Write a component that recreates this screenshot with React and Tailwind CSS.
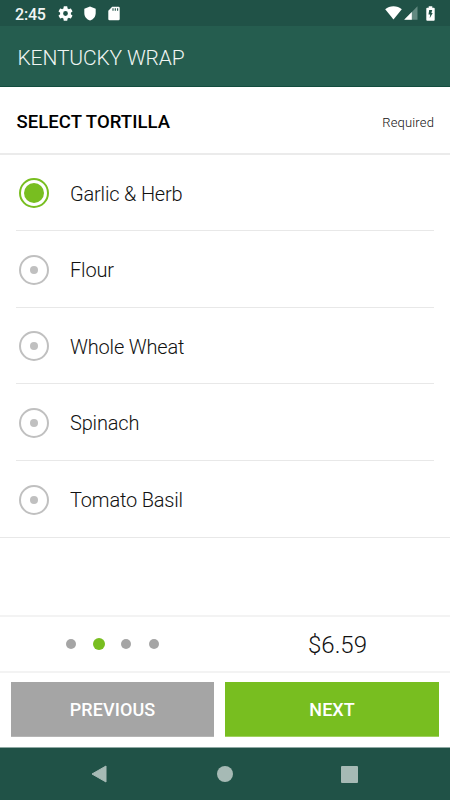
import { useState } from 'react';
import clsx from 'clsx';

const tortillas = ["Garlic & Herb", "Flour", "Whole Wheat", "Spinach", "Tomato Basil"]
const steps = [0, 1, 2, 3]

const StatusBar = ()=>{
    return(<div className="h-[26px] shrink-0 bg-[#205247] flex items-center justify-between pl-[15px] pr-[15px] text-[#f2f6f5]">
        <div className="flex items-center">
            <div className="w-[43px] text-[16px] leading-[24px] font-medium pt-[3px] tracking-[-0.2px]">2:45</div>
            {/* settings */}
            <svg className="w-[15px] h-[15px]" viewBox="2 2 20 20" fill="#ffffff">
                <path d="M19.14 12.94c.04-.3.06-.61.06-.94 0-.32-.02-.64-.07-.94l2.03-1.58a.49.49 0 0 0 .12-.61l-1.92-3.32a.49.49 0 0 0-.59-.22l-2.39.96c-.5-.38-1.03-.7-1.62-.94l-.36-2.54a.48.48 0 0 0-.48-.41h-3.84a.47.47 0 0 0-.47.41l-.36 2.54c-.59.24-1.13.57-1.62.94l-2.39-.96a.48.48 0 0 0-.59.22L2.74 8.87a.48.48 0 0 0 .12.61l2.03 1.58c-.05.3-.09.63-.09.94s.02.64.07.94l-2.03 1.58a.49.49 0 0 0-.12.61l1.92 3.32c.12.22.37.29.59.22l2.39-.96c.5.38 1.03.7 1.62.94l.36 2.54c.05.24.24.41.48.41h3.84c.24 0 .44-.17.47-.41l.36-2.54c.59-.24 1.13-.56 1.62-.94l2.39.96c.22.08.47 0 .59-.22l1.92-3.32a.47.47 0 0 0-.12-.61l-2.01-1.58zM12 15.2a3.2 3.2 0 1 1 0-6.4 3.2 3.2 0 0 1 0 6.4z" />
            </svg>
            {/* shield */}
            <svg className="w-3 h-[15px] ml-[11px]" viewBox="0 0 12 15" fill="#ffffff">
                <path d="M6 .5 11.7 2.8V7c0 3.500-2.300 6.400-5.700 7.600C2.600 13.400.3 10.500.3 7V2.800z" />
            </svg>
            {/* sd card */}
            <svg className="w-3 h-[15px] ml-3" viewBox="0 0 12 15">
                <path d="M4.200.8H10.500a1.200 1.200 0 0 1 1.200 1.200v11a1.200 1.200 0 0 1-1.200 1.200H1.500A1.200 1.200 0 0 1 .3 13V4.800z" fill="#ffffff" />
                <path d="M5 2.200v2.500M7.300 2.200v2.500M9.600 2.200v2.500" stroke="#205247" strokeWidth="1.100" />
            </svg>
        </div>
        <div className="flex items-center">
            <svg className="w-[17px] h-[14px]" viewBox="0 0 17 14" fill="#ffffff">
                <path d="M8.500 13.500.2 3.200C2.500 1.300 5.300.3 8.500.3s6 1 8.300 2.900z" />
            </svg>
            <svg className="w-[14px] h-[14px] ml-0.5" viewBox="0 0 14 14">
                <path d="M13.500.3v13.400H.2z" fill="#638a81" />
                <path d="M7.800 6v7.700H.2z" fill="#ffffff" />
            </svg>
            <svg className="w-[9px] h-[15px] ml-2" viewBox="0 0 9 15">
                <path d="M2.700.3h3.600v1.400h1.500a.9.9 0 0 1 .9.900v11.200a.9.9 0 0 1-.9.900H1.200a.9.9 0 0 1-.9-.9V2.600a.9.9 0 0 1 .9-.9h1.500z" fill="#ffffff" />
                <path d="M3.200 4h3L5.400 6.900h1.300L3.700 12.300l.5-3.800H2.500z" fill="#205247" />
            </svg>
        </div>
    </div>)
}

const Radio = ({ checked })=>{
    return(<span className={clsx("size-[30px] rounded-full border-2 flex items-center justify-center shrink-0", checked ? "border-[#78be20]" : "border-[#c0c0c0]")}>
        <span className={clsx("rounded-full", checked ? "size-5 bg-[#78be20]" : "size-2 bg-[#c0c0c0]")}></span>
    </span>)
}

const App = ()=>{
    const [selected, setSelected] = useState(0)
    const [step, setStep] = useState(1)

    return(<div className="w-[450px] h-[800px] flex flex-col bg-white text-[#111111] font-['Roboto',sans-serif] overflow-hidden">
        <StatusBar />
        <header className="h-[61px] shrink-0 bg-[#255d4f] border-b border-[#134d3e] flex items-center pl-[17.5px] pt-[5px]">
            <h1 className="text-[21px] font-light text-[#f0f5f3] tracking-[-0.15px]">KENTUCKY WRAP</h1>
        </header>

        <div className="h-[67.6px] shrink-0 border-b-2 border-[#ebebeb] flex items-center justify-between px-4 pt-1">
            <h2 className="text-[18.5px] font-medium pt-[3px] pl-[0.5px] text-black tracking-[0.06px]">SELECT TORTILLA</h2>
            <span className="text-[13px] font-light tracking-[0.15px] pt-px">Required</span>
        </div>

        <ul className="flex-1 flex flex-col">
            {tortillas.map((name, i)=>(
                <li key={name} className={clsx("h-[76.6px]", i == tortillas.length - 1 ? "border-b border-[#e8e8e8]" : "px-4")}>
                    <button type="button" onClick={()=>setSelected(i)} className={clsx("w-full h-full flex items-center gap-[21px] pt-[1.6px] text-left text-[20px] tracking-[-0.18px] font-light", i == tortillas.length - 1 ? "pl-[19px]" : "pl-[3px] border-b border-[#e8e8e8]")}>
                        <Radio checked={selected == i} />
                        <span className="pt-px">{name}</span>
                    </button>
                </li>
            ))}
        </ul>

        <div className="h-[58px] shrink-0 border-y-2 border-[#f3f3f3] grid grid-cols-2 items-center">
            <div className="flex items-center justify-center">
                {steps.map((s)=>(
                    <span key={s} className="w-[27.4px] flex justify-center">
                        <span className={clsx("rounded-full", step == s ? "size-3 bg-[#78be20]" : "size-[10px] bg-[#a5a5a5]")}></span>
                    </span>
                ))}
            </div>
            <div className="text-center text-[24px] font-light pt-0.5">$6.59</div>
        </div>

        <div className="h-[74px] shrink-0 pl-[11px] pr-[11px] pt-[9px] flex gap-[11px] text-[18px] font-medium text-white">
            <button type="button" onClick={()=>setStep(Math.max(step - 1, 0))} className="w-[203px] h-[55px] bg-[#a5a5a5] border-b border-[#b5b5b5] tracking-[0.12px] pt-px">PREVIOUS</button>
            <button type="button" onClick={()=>setStep(Math.min(step + 1, 3))} className="flex-1 h-[55px] bg-[#78be20] border-b border-[#a0d15f] pt-px">NEXT</button>
        </div>

        <nav className="h-[53px] shrink-0 bg-[#205247] border-t border-[#8fa9a3] flex items-center">
            <svg className="w-4 h-[18px] ml-[91px]" viewBox="0 0 16 18">
                <path d="M15 1v16L1 9z" fill="#a6bab5" stroke="#a6bab5" strokeWidth="1" strokeLinejoin="round" />
            </svg>
            <span className="size-[15.5px] ml-[110px] rounded-full bg-[#a6bab5]"></span>
            <span className="size-[17px] ml-[108.5px] rounded-[1px] bg-[#a6bab5]"></span>
        </nav>
    </div>)
}

export default App
